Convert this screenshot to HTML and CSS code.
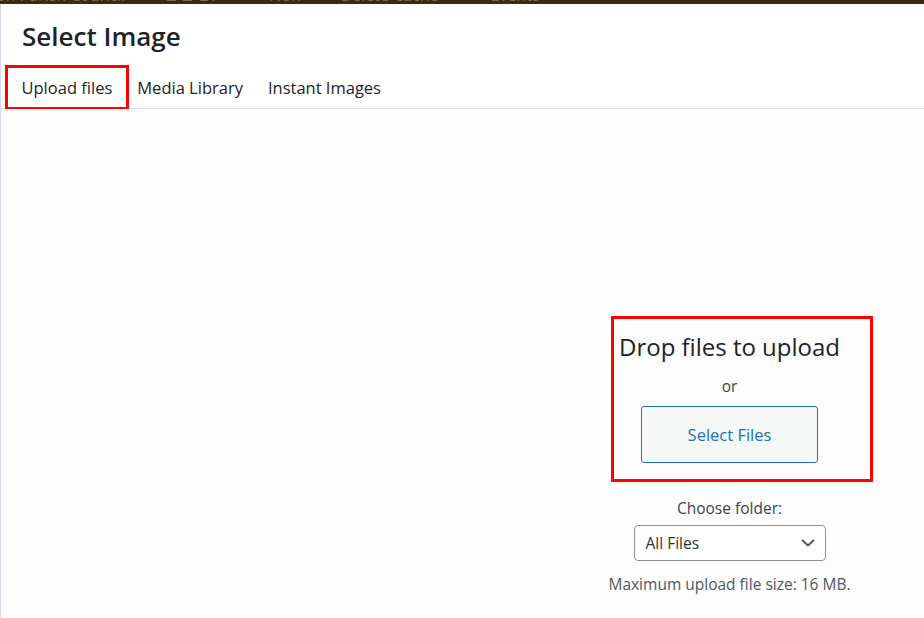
FILE: index.html
```html
<!DOCTYPE html>
<html lang="en">
<head>
	<meta charset="UTF-8">
	<title>Select Image</title>
	<link rel="stylesheet" href="styles.css">
</head>
<body>
	<div class="adminbar">
		<div class="adminbar-line">
			<span class="site">on Parish Council</span>
			<span class="item">&#9650;&#9650; 21</span>
			<span class="item">+ New</span>
			<span class="item">Delete Cache</span>
			<span class="item">&#9632; Events</span>
		</div>
	</div>
	<div class="frame">
		<div class="head">
			<h1 class="title">Select Image</h1>
			<div class="tabs">
				<a class="tab active">Upload files</a>
				<a class="tab">Media Library</a>
				<a class="tab">Instant Images</a>
			</div>
		</div>
		<div class="content">
			<div class="uploader">
				<div class="dropbox">
					<h2 class="drop-title">Drop files to upload</h2>
					<p class="or">or</p>
					<button class="select-btn">Select Files</button>
				</div>
				<p class="folder-label">Choose folder:</p>
				<div class="folder-select">
					<span>All Files</span>
					<svg class="chev" width="14" height="8" viewBox="0 0 14 8">
						<path d="M1 1 L7 6.5 L13 1" fill="none" stroke="#50575e" stroke-width="2"/>
					</svg>
				</div>
				<p class="max-size">Maximum upload file size: 16 MB.</p>
			</div>
		</div>
	</div>
</body>
</html>
```

FILE: styles.css
```css
html, body{
	margin: 0;
	padding: 0;
	height: 100%;
	overflow: hidden;
}
body{
	font-family: "Open Sans", "Noto Sans", sans-serif;
	color: #1d2327;
	background: #fff;
}
.adminbar{
	height: 4px;
	background: #3b2a12;
	overflow: hidden;
}
.adminbar-line{
	margin-top: -15px;
	margin-left: -4px;
	font-size: 16px;
	line-height: 20px;
	white-space: nowrap;
	color: #7a6a52;
}
.adminbar-line .item{
	margin-left: 34px;
}
.frame{
	border-left: 1px solid #d3dae4;
	height: 614px;
	display: flex;
	flex-direction: column;
}
.head{
	background: #fff;
	border-bottom: 1px solid #dcdcde;
}
.title{
	margin: 14px 0 0 21px;
	font-size: 26px;
	line-height: 36px;
	font-weight: 600;
	color: #1d2327;
}
.tabs{
	display: flex;
	margin: 15px 0 2px 8px;
}
.tab{
	padding: 0 12.5px;
	font-size: 16.5px;
	line-height: 37px;
	color: #1d2327;
}
.tab.active{
	outline: 3px solid #f00;
	outline-offset: 1px;
	color: #1d2327;
}
.content{
	flex: 1;
	background: #fdfdfd;
	padding-left: 534px;
}
.uploader{
	display: flex;
	flex-direction: column;
	align-items: center;
	padding-top: 207px;
}
.dropbox{
	border: 3px solid #f00;
	padding: 11px 30px 16px 5px;
	margin-right: -25px;
	display: flex;
	flex-direction: column;
	align-items: center;
}
.drop-title{
	margin: 0;
	font-size: 24px;
	line-height: 34px;
	font-weight: 400;
	color: #1d2327;
	white-space: nowrap;
}
.or{
	margin: 10px 0 0;
	font-size: 15.5px;
	line-height: 24px;
	color: #3c434a;
}
.select-btn{
	margin-top: 8px;
	width: 177px;
	height: 57px;
	background: #f6f7f7;
	border: 1px solid #2271b1;
	border-radius: 3px;
	color: #2271b1;
	font-family: inherit;
	font-size: 16.5px;
}
.folder-label{
	margin: 14px 0 0;
	font-size: 15.5px;
	line-height: 24px;
	color: #3c434a;
}
.folder-select{
	margin-top: 5px;
	box-sizing: border-box;
	width: 192px;
	height: 36px;
	border: 1px solid #8c8f94;
	border-radius: 4px;
	background: #fff;
	display: flex;
	align-items: center;
	justify-content: space-between;
	padding: 0 10px 0 11px;
	font-size: 15.5px;
	color: #2c3338;
}
.chev{
	display: block;
}
.max-size{
	margin: 11px 0 0;
	font-size: 15.5px;
	line-height: 24px;
	color: #50575e;
	white-space: nowrap;
}
```
